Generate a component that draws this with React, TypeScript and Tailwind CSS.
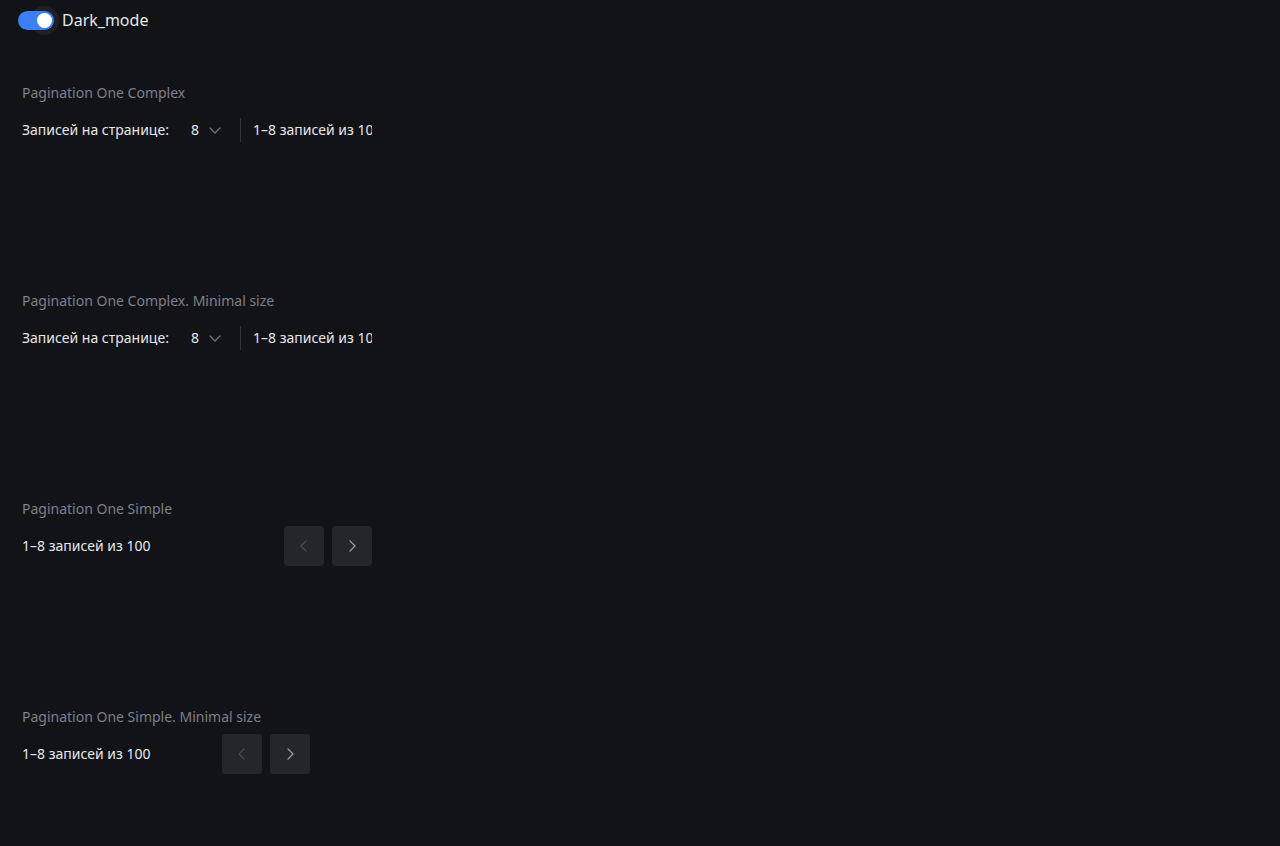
import React, { useState } from 'react';

const font = { fontFamily: '"Noto Sans", "Open Sans", sans-serif' };

function Chevron({ dir, className }: { dir: 'left' | 'right' | 'down'; className?: string }) {
  const d = dir === 'left' ? 'M10 3 L5 8 L10 13' : dir === 'right' ? 'M6 3 L11 8 L6 13' : 'M3 6 L8 11 L13 6';
  return (
    <svg width="16" height="16" viewBox="0 0 16 16" fill="none" className={className}>
      <path d={d} stroke="currentColor" strokeWidth="1.2" strokeLinecap="round" strokeLinejoin="round" />
    </svg>
  );
}

function Complex({ title }: { title: string }) {
  return (
    <section className="h-[208px]">
      <div className="text-sm text-[#7c7f8c] leading-5">{title}</div>
      <div className="mt-[15px] w-[350px] h-[24px] flex items-center overflow-hidden whitespace-nowrap text-sm text-[#e6e7eb]">
        <span className="w-[149px] shrink-0">Записей на странице:</span>
        <button className="ml-[20px] shrink-0 flex items-center gap-[8px] text-[#e6e7eb]">
          <span>8</span>
          <Chevron dir="down" className="text-[#6f7280]" />
        </button>
        <div className="ml-[17px] shrink-0 w-px h-[24px] bg-[#33353c]" />
        <span className="ml-[12px] shrink-0">1–8 записей из 100</span>
      </div>
    </section>
  );
}

function Simple({ title, width }: { title: string; width: string }) {
  return (
    <section className="h-[208px]">
      <div className="text-sm text-[#7c7f8c] leading-5">{title}</div>
      <div className={`mt-[7px] ${width} flex items-center justify-between text-sm text-[#e6e7eb]`}>
        <span>1–8 записей из 100</span>
        <div className="flex gap-[8px]">
          <button className="w-10 h-10 rounded-[4px] bg-[#25262c] flex items-center justify-center text-[#484a53]">
            <Chevron dir="left" />
          </button>
          <button className="w-10 h-10 rounded-[4px] bg-[#25262c] flex items-center justify-center text-[#9a9daa]">
            <Chevron dir="right" />
          </button>
        </div>
      </div>
    </section>
  );
}

export default function App() {
  const [dark, setDark] = useState(true);
  return (
    <div className="h-[846px] overflow-hidden bg-[#121317]" style={font}>
      <div className="flex items-center h-10 pl-[18px]">
        <button onClick={() => setDark(!dark)} className="relative w-[36px] h-[19px]">
          <span className="absolute left-[12px] top-[-5px] w-[29px] h-[29px] rounded-full bg-[#1f2024]" />
          <span className="absolute inset-0 rounded-full bg-[#3b7ff2]" />
          <span className="absolute left-[19px] top-[2px] w-[15px] h-[15px] rounded-full bg-white" />
        </button>
        <span className="ml-[8px] text-base text-[#e6e7eb]">Dark_mode</span>
      </div>
      <div className="pl-[22px] pt-[43px]">
        <Complex title="Pagination One Complex" />
        <Complex title="Pagination One Complex. Minimal size" />
        <Simple title="Pagination One Simple" width="w-[350px]" />
        <Simple title="Pagination One Simple. Minimal size" width="w-[288px]" />
      </div>
    </div>
  );
}
